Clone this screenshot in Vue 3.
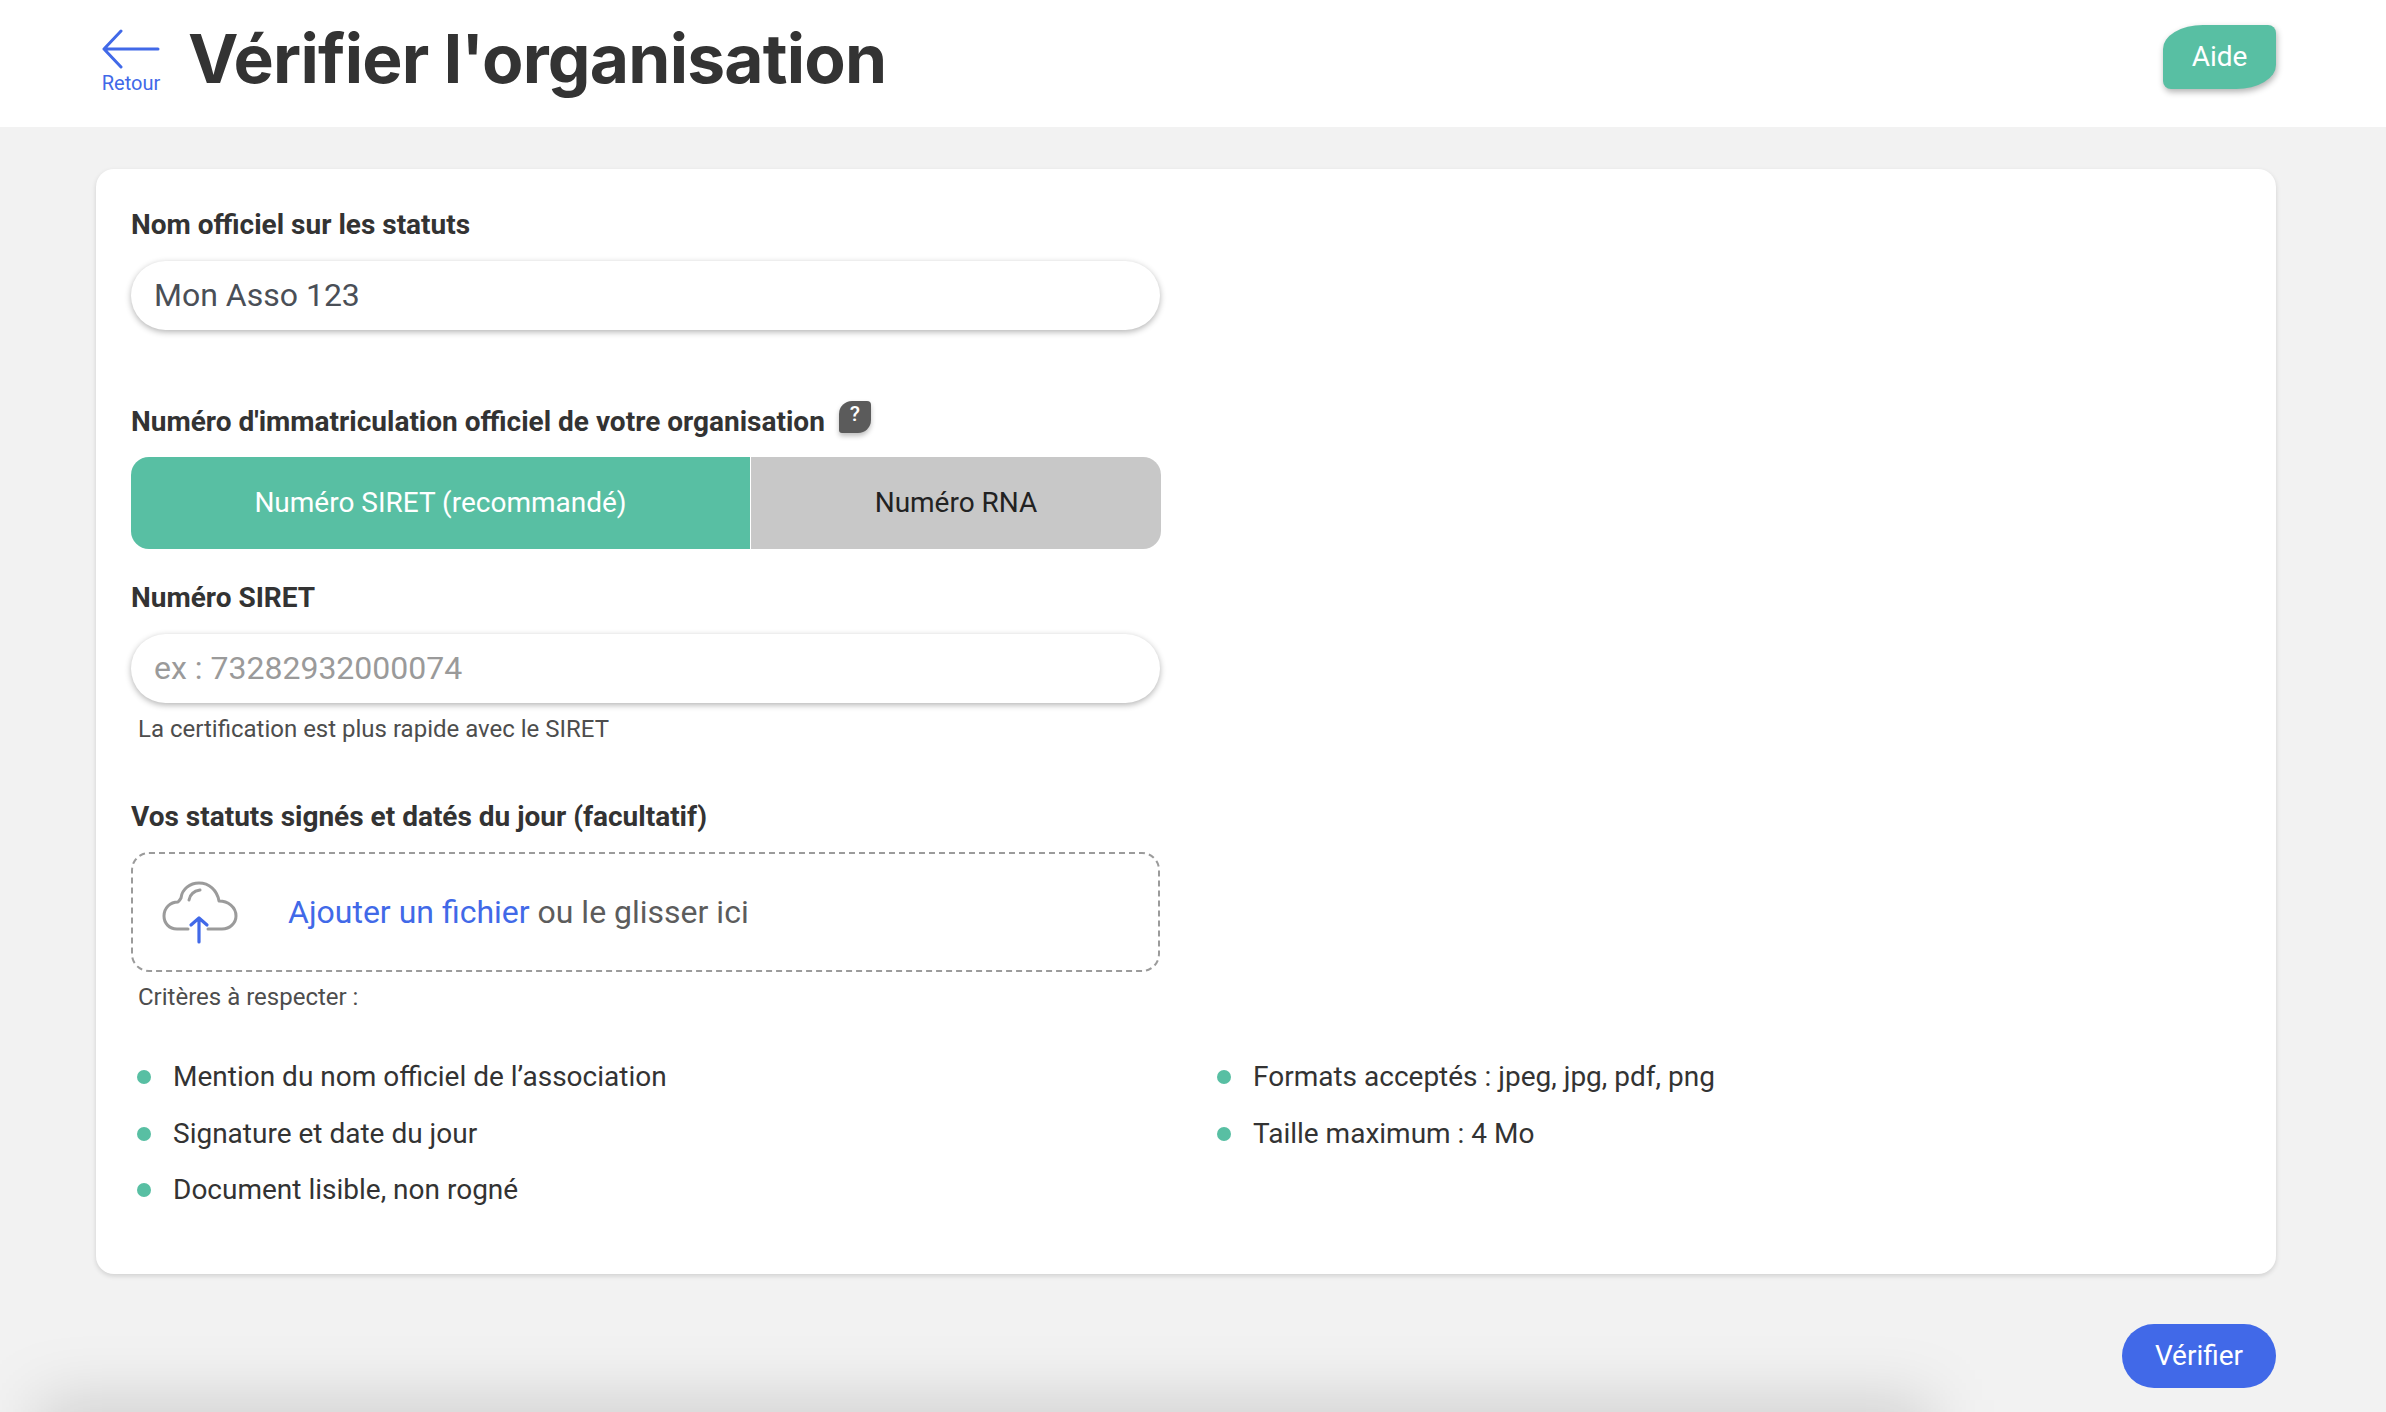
<script setup>
const leftCriteria = ['Mention du nom officiel de l’association', 'Signature et date du jour', 'Document lisible, non rogné']
const rightCriteria = ['Formats acceptés : jpeg, jpg, pdf, png', 'Taille maximum : 4 Mo']
</script>

<template>
  <div class="page">
    <header class="topbar">
      <a class="back">
        <svg class="back-icon" width="58" height="42" viewBox="0 0 58 42" fill="none" stroke="#4169e8" stroke-width="3" stroke-linecap="round" stroke-linejoin="round">
          <path d="M2 21H56M19 3L2 21L19 39" />
        </svg>
        <span>Retour</span>
      </a>
      <h1>Vérifier l'organisation</h1>
      <button class="help">Aide</button>
    </header>

    <main class="content">
      <section class="card">
        <div class="narrow">
          <label class="label first">Nom officiel sur les statuts</label>
          <div class="field value">Mon Asso 123</div>

          <div class="label with-tip">
            <span>Numéro d'immatriculation officiel de votre organisation</span>
            <span class="tip">?</span>
          </div>
          <div class="toggle">
            <div class="opt on">Numéro SIRET (recommandé)</div>
            <div class="opt off">Numéro RNA</div>
          </div>

          <label class="label siret">Numéro SIRET</label>
          <div class="field placeholder">ex : 73282932000074</div>
          <p class="hint">La certification est plus rapide avec le SIRET</p>

          <label class="label statuts">Vos statuts signés et datés du jour (facultatif)</label>
          <div class="drop">
            <svg width="76" height="66" viewBox="0 0 76 66" fill="none" stroke-linecap="round" stroke-linejoin="round">
              <path d="M26 50H15C7 50 2 44 2 37C2 29 8 23 16 23C17 22 18 21 19 19C20 10 28 4 37 4C47 4 55 11 57 22C66 22 74 28 74 37C74 44 68 50 60 50H46" stroke="#9b9b9b" stroke-width="3" />
              <path d="M27 21C28 15 32 12 38 11" stroke="#9b9b9b" stroke-width="3" />
              <path d="M37 63V39M29 46L37 39L45 46" stroke="#4169e8" stroke-width="3.2" />
            </svg>
            <span class="drop-text"><span class="link">Ajouter un fichier</span> ou le glisser ici</span>
          </div>
          <p class="hint criteria">Critères à respecter :</p>
        </div>

        <div class="lists">
          <ul>
            <li v-for="item in leftCriteria" :key="item">{{ item }}</li>
          </ul>
          <ul>
            <li v-for="item in rightCriteria" :key="item">{{ item }}</li>
          </ul>
        </div>
      </section>

      <div class="actions">
        <button class="verify">Vérifier</button>
      </div>
    </main>
    <div class="offscreen-shadow"></div>
  </div>
</template>

<style>
html, body { margin: 0; background: #f2f2f2; }
</style>

<style scoped>
.page {
  position: relative;
  height: 1412px;
  overflow: hidden;
  background: #f2f2f2;
  font-family: Roboto, "Liberation Sans", sans-serif;
  color: #333;
}
.topbar {
  height: 127px;
  box-sizing: border-box;
  background: #fff;
  display: flex;
  align-items: flex-start;
  padding: 0 110px 0 102px;
}
.back {
  display: flex;
  flex-direction: column;
  align-items: center;
  width: 58px;
  margin-top: 28px;
  color: #4169e8;
  font-size: 20px;
  line-height: 24px;
}
.back-icon { display: block; margin-bottom: 1px; }
h1 {
  margin: 16px 0 0 28px;
  font-family: Inter, sans-serif;
  font-size: 67.7px;
  line-height: 84px;
  font-weight: 700;
  letter-spacing: -0.8px;
  color: #333;
}
.help {
  margin-left: auto;
  margin-top: 25px;
  width: 113px;
  height: 64px;
  border: 0;
  padding: 0 0 2px;
  background: #58bfa3;
  color: #fff;
  font: 400 28px Roboto, sans-serif;
  border-radius: 40px 8px 40px 8px / 24px 8px 24px 8px;
  box-shadow: 1px 3px 6px rgba(0, 0, 0, .3);
}
.content { padding: 42px 110px 0 96px; }
.card {
  height: 1105px;
  box-sizing: border-box;
  background: #fff;
  border-radius: 18px;
  padding: 0 35px;
  box-shadow: 0 2px 5px rgba(0, 0, 0, .14);
}
.narrow { width: 1029px; }
.label {
  display: block;
  font-size: 28px;
  line-height: 34px;
  font-weight: 700;
  color: #333;
}
.first { padding-top: 39px; }
.field {
  box-sizing: border-box;
  height: 69px;
  margin-top: 19px;
  padding: 0 23px 1px;
  border-radius: 35px;
  display: flex;
  align-items: center;
  font-size: 32px;
  background: #fff;
  box-shadow: 0 2px 6px rgba(0, 0, 0, .3);
}
.value { color: #4a4f57; }
.placeholder { color: #9a9a9a; }
.with-tip {
  display: flex;
  align-items: center;
  margin-top: 75px;
}
.tip {
  width: 32px;
  height: 32px;
  margin: -10px 0 0 14px;
  border-radius: 13px 4px 13px 3px;
  background: #5b5b5b;
  color: #fff;
  font-size: 21px;
  font-weight: 500;
  line-height: 27px;
  text-align: center;
  box-shadow: 0 3px 5px rgba(0, 0, 0, .25);
}
.toggle {
  display: flex;
  width: 1030px;
  height: 92px;
  margin-top: 18px;
  border-radius: 18px;
  overflow: hidden;
  font-size: 28px;
  line-height: 30px;
}
.opt {
  display: flex;
  align-items: center;
  justify-content: center;
  box-sizing: border-box;
}
.on { width: 619px; background: #58bfa3; color: #fff; }
.off { width: 410px; margin-left: 1px; background: #c8c8c8; color: #222; }
.siret { margin-top: 32px; }
.siret + .field { margin-top: 19px; }
.hint {
  margin: 12px 0 0 7px;
  font-size: 24px;
  line-height: 28px;
  color: #4d4d4d;
}
.statuts { margin-top: 57px; }
.drop {
  box-sizing: border-box;
  height: 120px;
  margin-top: 18px;
  padding-left: 29px;
  border: 2px dashed #9b9b9b;
  border-radius: 18px;
  display: flex;
  align-items: center;
  font-size: 32px;
  color: #5c5c5c;
}
.drop-text { margin-left: 50px; }
.link { color: #4169e8; }
.criteria { margin-top: 11px; }
.lists {
  display: grid;
  grid-template-columns: 1080px 1fr;
  margin-top: 38px;
}
ul { list-style: none; margin: 0; padding: 0 0 0 6px; }
li {
  position: relative;
  padding-left: 36px;
  height: 56.5px;
  line-height: 56.5px;
  font-size: 28px;
  color: #333;
}
li::before {
  content: "";
  position: absolute;
  left: 0;
  top: 21px;
  width: 14px;
  height: 14px;
  border-radius: 50%;
  background: #58bfa3;
}
.actions {
  display: flex;
  justify-content: flex-end;
  margin-top: 50px;
}
.verify {
  width: 154px;
  height: 64px;
  border: 0;
  padding: 0 0 2px;
  border-radius: 32px;
  background: #4169e8;
  color: #fff;
  font: 400 28px Roboto, sans-serif;
}
.offscreen-shadow {
  position: absolute;
  left: 38px;
  top: 1400px;
  width: 1892px;
  height: 120px;
  background: rgba(0, 0, 0, .14);
  filter: blur(32px);
}
</style>
